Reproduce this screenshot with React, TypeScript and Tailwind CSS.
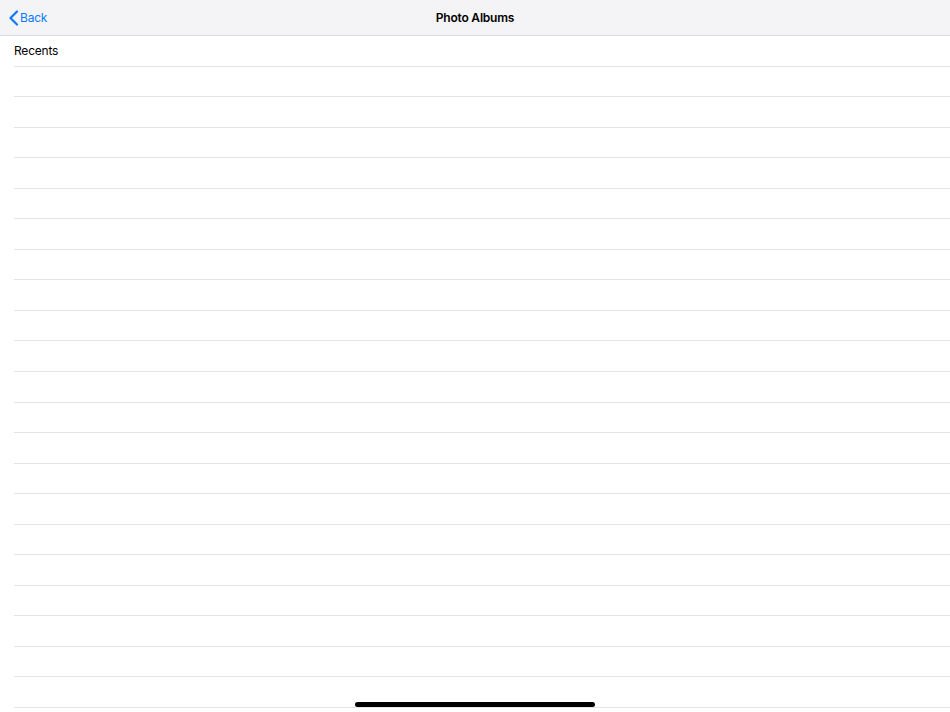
import React from "react";

export default function App() {
  const rows = Array.from({ length: 22 }, (_, i) => (i === 0 ? "Recents" : ""));
  return (
    <div
      className="relative w-[950px] h-[712px] overflow-hidden bg-white tracking-[-0.2px]"
      style={{ fontFamily: "Inter, 'Liberation Sans', sans-serif" }}
    >
      <div className="relative flex items-center h-[36px] bg-[#f4f4f7] border-b border-[#dcdce0]">
        <div className="flex items-center pl-[8px] gap-[1px] text-[#0a7aff] text-[12px]">
          <svg width="11" height="16" viewBox="0 0 11 16" fill="none">
            <path d="M9 1.5L2.5 8L9 14.5" stroke="#0a7aff" strokeWidth="2.2" strokeLinecap="round" strokeLinejoin="round" />
          </svg>
          <span>Back</span>
        </div>
        <div className="absolute left-0 right-0 top-0 h-[35px] flex items-center justify-center text-[12px] font-semibold text-black pointer-events-none">
          Photo Albums
        </div>
      </div>
      <div className="pl-[14px]">
        {rows.map((label, i) => (
          <div
            key={i}
            className="h-[30.55px] flex items-center border-b border-[#e4e4e6] text-[12px] text-black"
          >
            {label}
          </div>
        ))}
      </div>
      <div className="absolute left-[355px] top-[702px] w-[240px] h-[5px] rounded-full bg-black" />
    </div>
  );
}
